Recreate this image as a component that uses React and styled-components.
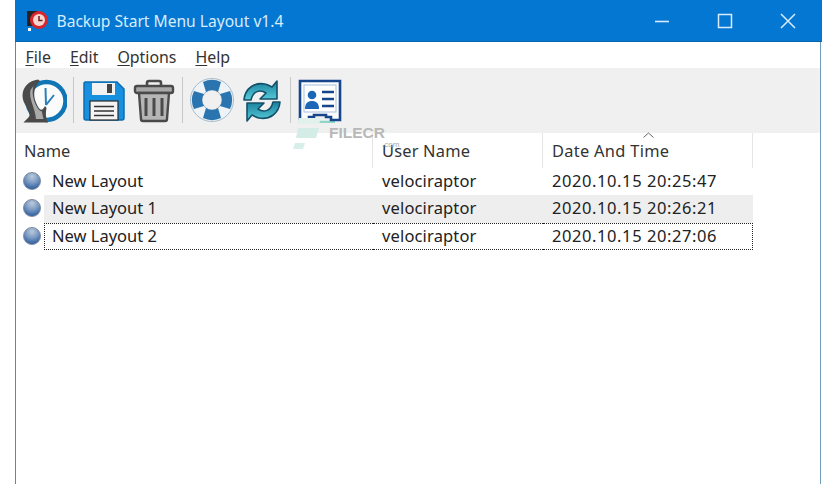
import React from "react";
import styled, { createGlobalStyle } from "styled-components";

const Global = createGlobalStyle`
  html, body { margin: 0; padding: 0; background: #fff; overflow: hidden; }
  body { font-family: "Noto Sans", "Open Sans", sans-serif; color: #222; }
`;

const Page = styled.div`
  width: 836px;
  height: 484px;
  padding-left: 15px;
  box-sizing: border-box;
  overflow: hidden;
  background: #fff;
`;

const Window = styled.div`
  position: relative;
  width: 806px;
  height: 484px;
  box-sizing: border-box;
  border-left: 1.5px solid #4a8fb8;
  border-right: 1.5px solid #6f9dbb;
  display: flex;
  flex-direction: column;
`;

const TitleBar = styled.div`
  height: 42px;
  flex: none;
  margin: 0 -1.5px;
  background: #0477d3;
  border-bottom: 1px solid #0a65ad;
  box-sizing: border-box;
  display: flex;
  align-items: center;
  padding-left: 11px;
  color: #d8ecfb;
`;

const TitleText = styled.span`
  margin-left: 7px;
  font-size: 15.6px;
  white-space: nowrap;
  flex: 1;
`;

const WinButton = styled.button`
  width: 63px;
  height: 41px;
  padding: 0;
  border: 0;
  background: transparent;
  display: flex;
  align-items: center;
  justify-content: center;
`;

const WinButtons = styled.div`
  display: flex;
  margin-right: 2px;
`;

const MenuBar = styled.div`
  height: 26px;
  flex: none;
  display: flex;
  gap: 19px;
  align-items: center;
  padding: 3px 0 0 9.5px;
  box-sizing: border-box;
  font-size: 15.9px;
  background: #fff;
  color: #333;
`;

const MenuItem = styled.span`
  u { text-underline-offset: 2px; text-decoration-thickness: 1px; }
`;

const Toolbar = styled.div`
  height: 65px;
  flex: none;
  background: #f0f0f0;
  display: flex;
  align-items: center;
  padding: 0 0 2px 5px;
  box-sizing: border-box;
`;

const ToolIcon = styled.svg`
  display: block;
  flex: none;
  width: 46px;
  height: 46px;
  margin-right: ${(p) => p.$gap || 0}px;
`;

const Separator = styled.div`
  width: 1px;
  height: 46px;
  background: #c6c6c6;
  margin: 0 ${(p) => p.$right}px 0 ${(p) => p.$left}px;
  flex: none;
`;

const List = styled.div`
  width: 737px;
`;

const Header = styled.div`
  height: 35px;
  display: grid;
  grid-template-columns: 357px 170px 210px;
  font-size: 16.4px;
  color: #333;
`;

const HeaderCell = styled.div`
  position: relative;
  display: flex;
  align-items: center;
  padding: 0 0 1px ${(p) => p.$pad}px;
  box-sizing: border-box;
  border-right: 1px solid #e5e5e5;
  letter-spacing: ${(p) => p.$spacing || 0}px;
`;

const SortArrow = styled.svg`
  position: absolute;
  left: 100px;
  top: -1px;
  width: 11px;
  height: 6px;
`;

const RowLine = styled.div`
  display: grid;
  grid-template-columns: 28px 329px 170px 210px;
  height: 27.3px;
  align-items: center;
  font-size: 16.5px;
  line-height: 24px;
`;

const Ball = styled.div`
  width: 18px;
  height: 18px;
  margin: -1px 0 0 7px;
  border-radius: 50%;
  background: radial-gradient(circle at 50% 22%, #bcc9da 0%, #7d9cc4 42%, #28599b 88%);
  border: 1px solid #7a8aa0;
  box-sizing: border-box;
`;

const NameCell = styled.div`
  height: 100%;
  display: flex;
  align-items: center;
  padding: 0 0 ${(p) => (p.$focus ? 0 : 2)}px ${(p) => (p.$focus ? 7 : 8)}px;
  box-sizing: border-box;
  background: ${(p) => (p.$hover ? "#eeeeee" : "transparent")};
  border: ${(p) => (p.$focus ? "1px dotted #222" : "none")};
  border-right: none;
`;

const Cell = styled.div`
  height: 100%;
  display: flex;
  align-items: center;
  padding: 0 0 ${(p) => (p.$focus ? 0 : 2)}px 9px;
  box-sizing: border-box;
  letter-spacing: ${(p) => (p.$last ? 0.58 : 0.15)}px;
  background: ${(p) => (p.$hover ? "#eeeeee" : "transparent")};
  border-top: ${(p) => (p.$focus ? "1px dotted #222" : "none")};
  border-bottom: ${(p) => (p.$focus ? "1px dotted #222" : "none")};
  border-right: ${(p) => (p.$last && p.$focus ? "1px dotted #222" : "none")};
`;

const Watermark = styled.div`
  position: absolute;
  left: 277px;
  top: 118px;
  display: flex;
  align-items: flex-start;
  gap: 8px;
  pointer-events: none;
`;

const WaterText = styled.div`
  font-family: "Liberation Sans", sans-serif;
  font-size: 15.5px;
  font-weight: 700;
  color: #b8b8b8;
  position: relative;
  line-height: 18px;
  margin-top: 6px;
`;

const WaterDot = styled.span`
  position: absolute;
  left: 53px;
  top: 12px;
  font-size: 8px;
  font-weight: 400;
  color: #a8a8a8;
`;

const rows = [
  { name: "New Layout", time: "2020.10.15 20:25:47" },
  { name: "New Layout 1", time: "2020.10.15 20:26:21", hover: true },
  { name: "New Layout 2", time: "2020.10.15 20:27:06", focus: true },
];

const TitleIcon = () => (
  <svg width="24" height="24" viewBox="0 0 24 24">
    <rect x="1" y="2" width="11" height="15" fill="#222" />
    <rect x="2" y="19" width="3" height="3" fill="#fff" />
    <circle cx="13" cy="11" r="9" fill="#d8262c" />
    <circle cx="13" cy="11" r="6" fill="#f4d7d2" />
    <path d="M13 7v4.5h3.5" fill="none" stroke="#7a1a1a" strokeWidth="1.5" />
  </svg>
);

const ClockIcon = () => (
  <ToolIcon viewBox="0 0 46 46">
    <circle cx="25.5" cy="24" r="19" fill="#fbfbfb" stroke="#0f75b5" strokeWidth="4.5" />
    <path d="M25 28 L24.5 11 M25 28 L33 18" stroke="#2a7fba" strokeWidth="2" fill="none" />
    <path
      d="M17 2.500C8 3.500 1.500 10 1.500 18.500 1.500 27 8 31 8.500 38 8.500 40.500 5 42.500 2.500 45.500H27C24.500 41 24.500 36 25.500 31L24 29C22 33 19.500 34 17.500 30.500 14.500 25 12.500 20 13.500 14 14 10 16 6.500 19 4z"
      fill="#4a4a4a"
    />
    <path d="M9.500 13C7.500 22 14 30 15 42H22.500C21.500 38 21 36 21 34.500 17 34 13 25 12 19 11.500 16 11.500 12 12.500 9z" fill="#a9a9a9" />
  </ToolIcon>
);

const SaveIcon = ({ gap }) => (
  <ToolIcon $gap={gap} viewBox="0 0 46 46">
    <path d="M4 5h32l7 7v29a2 2 0 0 1-2 2H5a2 2 0 0 1-2-2V6z" fill="#1790e0" stroke="#0b6fb3" strokeWidth="1.5" />
    <rect x="11" y="6" width="23" height="12" fill="#f2f2f2" />
    <rect x="26" y="7" width="5" height="9" fill="#444" />
    <rect x="9" y="24" width="28" height="19" fill="#f4f4f4" stroke="#2a2a2a" strokeWidth="1.2" />
    <path d="M13 29.500h20M13 34h20M13 38.500h20" stroke="#333" strokeWidth="1.6" />
  </ToolIcon>
);

const TrashIcon = () => (
  <ToolIcon viewBox="0 0 46 46">
    <path d="M16 9V6a2 2 0 0 1 2-2h10a2 2 0 0 1 2 2v3" fill="none" stroke="#4a4a4a" strokeWidth="2.6" />
    <rect x="4" y="9" width="38" height="7" rx="2" fill="#a8a8a8" stroke="#4a4a4a" strokeWidth="2.4" />
    <path d="M8 16l2 26a2 2 0 0 0 2 2h22a2 2 0 0 0 2-2l2-26z" fill="#b5b5b5" stroke="#4a4a4a" strokeWidth="2.4" />
    <path d="M15 21v18M23 21v18M31 21v18" stroke="#4a4a4a" strokeWidth="3" />
  </ToolIcon>
);

const BuoyIcon = ({ gap }) => (
  <ToolIcon $gap={gap} viewBox="0 0 46 46">
    <circle cx="23" cy="23" r="16" fill="none" stroke="#eef3f7" strokeWidth="12" />
    <circle cx="23" cy="23" r="21.500" fill="none" stroke="#a9bccb" strokeWidth="1" />
    <circle cx="23" cy="23" r="10" fill="#f0f0f0" stroke="#a9bccb" strokeWidth="1" />
    <g fill="#2a75b0">
      <path d="M14 5a21 21 0 0 1 18 0l-3 10a11 11 0 0 0-12 0z" />
      <path d="M14 41a21 21 0 0 0 18 0l-3-10a11 11 0 0 1-12 0z" />
      <path d="M5 14a21 21 0 0 0 0 18l10-3a11 11 0 0 1 0-12z" />
      <path d="M41 14a21 21 0 0 1 0 18l-10-3a11 11 0 0 0 0-12z" />
    </g>
  </ToolIcon>
);

const RefreshIcon = () => (
  <ToolIcon viewBox="0 0 46 46">
    <defs>
      <linearGradient id="refreshFill" x1="0" y1="0" x2="0" y2="1">
        <stop offset="0" stopColor="#1a7f9e" />
        <stop offset="1" stopColor="#57cdd8" />
      </linearGradient>
    </defs>
    <path
      d="M5 23C6 11 16 5 26 7c3 .5 5 2 7 3l5-6v18H21l6-6c-6-4-13-2-15 7z"
      fill="url(#refreshFill)"
      stroke="#14506a"
      strokeWidth="1.6"
      strokeLinejoin="round"
    />
    <path
      d="M41 25c-1 12-11 18-21 16-3-.5-5-2-7-3l-5 6V26h17l-6 6c6 4 13 2 15-7z"
      fill="url(#refreshFill)"
      stroke="#14506a"
      strokeWidth="1.6"
      strokeLinejoin="round"
    />
  </ToolIcon>
);

const CardIcon = () => (
  <ToolIcon viewBox="0 0 46 46">
    <path d="M8 45h30" stroke="#8fd6c8" strokeWidth="2.500" />
    <path
      d="M3 4h40v39H34v-3h-5v-2H17v2h-5v3H3z"
      fill="#fbfdff"
      stroke="#17468c"
      strokeWidth="2.600"
    />
    <rect x="7" y="8" width="32" height="27" fill="#fff" stroke="#a9c0da" strokeWidth="1" />
    <circle cx="15" cy="18" r="4.300" fill="#1c66b8" />
    <path d="M8 32c0-6 3-8 7-8s7 2 7 8z" fill="#1c66b8" />
    <path d="M25 15h12M25 22h12M25 29h12" stroke="#17468c" strokeWidth="2.400" />
  </ToolIcon>
);

const WaterLogo = () => (
  <svg width="28" height="32" viewBox="0 0 28 32">
    <path d="M6 0h22l-2 6H4z" fill="#e2f1ec" />
    <path d="M5 10h21l-3 10H3z" fill="#d3ece5" />
    <path d="M2 25h10l-2 6H0z" fill="#d8efe9" />
  </svg>
);

export default function App() {
  return (
    <Page>
      <Global />
      <Window>
        <TitleBar>
          <TitleIcon />
          <TitleText>Backup Start Menu Layout v1.4</TitleText>
          <WinButtons>
            <WinButton aria-label="Minimize">
              <svg width="16" height="16" viewBox="0 0 16 16">
                <path d="M1 8.500h14" stroke="#d8ecfb" strokeWidth="1.600" />
              </svg>
            </WinButton>
            <WinButton aria-label="Maximize">
              <svg width="16" height="16" viewBox="0 0 16 16">
                <rect x="1.500" y="1.500" width="13" height="13" fill="none" stroke="#d8ecfb" strokeWidth="1.500" />
              </svg>
            </WinButton>
            <WinButton aria-label="Close">
              <svg width="16" height="16" viewBox="0 0 16 16">
                <path d="M1 1l14 14M15 1L1 15" stroke="#d8ecfb" strokeWidth="1.500" />
              </svg>
            </WinButton>
          </WinButtons>
        </TitleBar>
        <MenuBar>
          <MenuItem><u>F</u>ile</MenuItem>
          <MenuItem><u>E</u>dit</MenuItem>
          <MenuItem><u>O</u>ptions</MenuItem>
          <MenuItem><u>H</u>elp</MenuItem>
        </MenuBar>
        <Toolbar>
          <ClockIcon />
          <Separator $left={6} $right={6.5} />
          <SaveIcon gap={4} />
          <TrashIcon />
          <Separator $left={5} $right={6.5} />
          <BuoyIcon gap={3.5} />
          <RefreshIcon />
          <Separator $left={5} $right={6} />
          <CardIcon />
        </Toolbar>
        <List>
          <Header>
            <HeaderCell $pad={8}>Name</HeaderCell>
            <HeaderCell $pad={9} $spacing={0.2}>User Name</HeaderCell>
            <HeaderCell $pad={9} $spacing={0.3}>
              <SortArrow viewBox="0 0 11 6">
                <path d="M0.500 5.500L5.500 1l5 4.500" fill="none" stroke="#666" strokeWidth="1" />
              </SortArrow>
              Date And Time
            </HeaderCell>
          </Header>
          {rows.map((r) => (
            <RowLine key={r.name}>
              <Ball />
              <NameCell $hover={r.hover} $focus={r.focus}>{r.name}</NameCell>
              <Cell $hover={r.hover} $focus={r.focus}>velociraptor</Cell>
              <Cell $hover={r.hover} $focus={r.focus} $last>{r.time}</Cell>
            </RowLine>
          ))}
        </List>
        <Watermark>
          <WaterLogo />
          <WaterText>
            FILECR
            <WaterDot>.com</WaterDot>
          </WaterText>
        </Watermark>
      </Window>
    </Page>
  );
}
